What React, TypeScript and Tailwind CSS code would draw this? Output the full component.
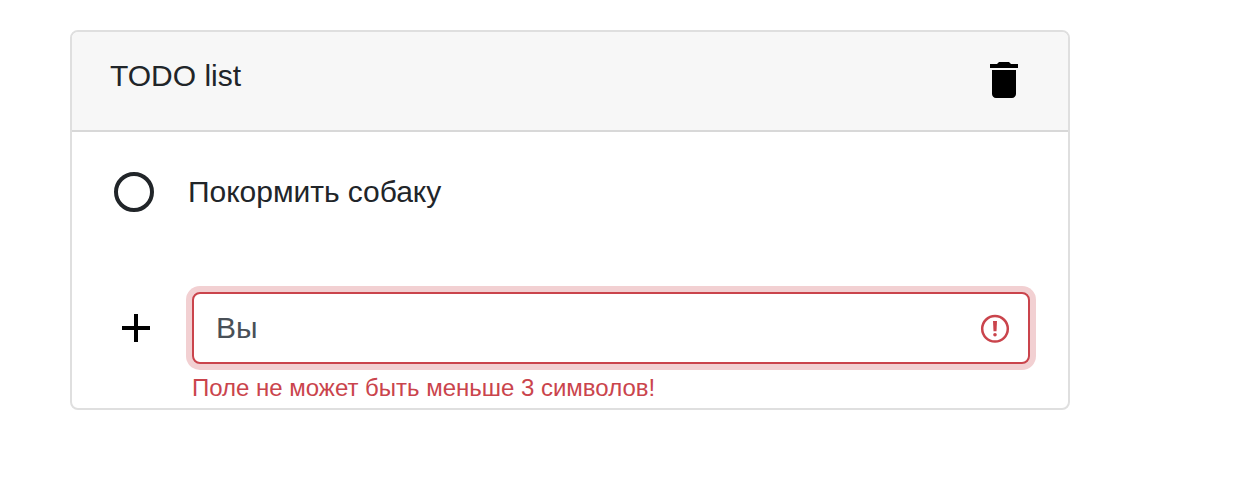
export default function App() {
  return (
    <main className="h-[486px] bg-white pt-[30px] pl-[70px] font-['Liberation_Sans',sans-serif] text-[#212529]">
      <section className="h-[380px] w-[1000px] overflow-hidden rounded-lg border-2 border-[#dfdfdf] bg-white">
        <header className="flex h-[100px] items-start justify-between border-b-2 border-[#d8d8d8] bg-[#f7f7f7] pt-6 pr-10 pl-[38px]">
          <h1 className="-mt-px text-[30px] leading-[42px]">TODO list</h1>
          <button aria-label="Delete list">
            <svg className="block h-12 w-12" viewBox="0 0 24 24" fill="black">
              <path d="M6 19c0 1.1.9 2 2 2h8c1.1 0 2-.9 2-2V7H6v12zM19 4h-3.5l-1-1h-5l-1 1H5v2h14V4z" />
            </svg>
          </button>
        </header>
        <div className="flex h-[120px] items-center pl-[38px]">
          <svg className="h-12 w-12" viewBox="0 0 48 48" fill="none" stroke="#212529" strokeWidth="4">
            <circle cx="24" cy="24" r="18" />
          </svg>
          <span className="ml-[30px] text-[30px] leading-[42px] tracking-[-0.04px]">Покормить собаку</span>
        </div>
        <form className="flex items-start pt-10 pr-[38px] pl-10">
          <svg className="mt-3 h-12 w-12 shrink-0" viewBox="0 0 24 24" fill="black">
            <path d="M19 13h-6v6h-2v-6H5v-2h6V5h2v6h6v2z" />
          </svg>
          <div className="ml-8 flex-1">
            <div className="flex h-[72px] items-center rounded-lg border-2 border-[#ca444c] bg-white pr-[17px] pl-[22px] ring-6 ring-[#f2d0d2]">
              <input aria-label="Task" defaultValue="Вы" className="-mt-0.5 min-w-0 flex-1 bg-transparent text-[30px] text-[#495057] outline-none" />
              <svg className="mt-0.5 h-8 w-8" viewBox="0 0 32 32" fill="#ca444c">
                <circle cx="16" cy="15.8" r="12.8" fill="none" stroke="#ca444c" strokeWidth="2.5" />
                <path d="M14 8h4l-.5 10.3h-3z" />
                <circle cx="16" cy="21.8" r="1.8" />
              </svg>
            </div>
            <p className="mt-2 text-2xl leading-8 tracking-[-0.01px] text-[#ca444c]">Поле не может быть меньше 3 символов!</p>
          </div>
        </form>
      </section>
    </main>
  );
}
